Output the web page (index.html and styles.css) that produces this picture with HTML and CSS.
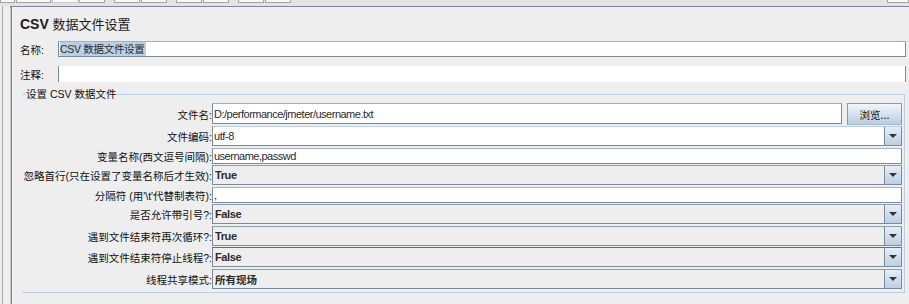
FILE: index.html
```html
<!DOCTYPE html>
<html lang="zh-CN">
<head>
    <meta charset="UTF-8">
    <meta name="viewport" content="width=device-width, initial-scale=1.0">
    <title>CSV 数据文件设置</title>
    <link rel="stylesheet" href="styles.css">
</head>
<body>
    <div class="toolbar">
        <div class="tb-group first">
            <span class="tb-btn"></span>
            <span class="tb-btn"></span>
            <span class="tb-btn light"></span>
            <span class="tb-btn"></span>
        </div>
        <div class="tb-group">
            <span class="tb-btn"></span>
            <span class="tb-btn"></span>
        </div>
        <div class="tb-group">
            <span class="tb-btn"></span>
            <span class="tb-btn"></span>
        </div>
        <div class="tb-group">
            <span class="tb-btn"></span>
            <span class="tb-btn"></span>
        </div>
        <div class="tb-group last">
            <span class="tb-btn"></span>
        </div>
    </div>

    <div class="main">
        <div class="gutter"></div>
        <div class="panel">
            <h1 class="title"><b>CSV</b> 数据文件设置</h1>

            <div class="line-row">
                <label class="short-label">名称:</label>
                <div class="field"><span class="sel">CSV 数据文件设置</span></div>
            </div>
            <div class="line-row comment-row">
                <label class="short-label">注释:</label>
                <div class="field comment"></div>
            </div>

            <fieldset class="group">
                <legend>设置 CSV 数据文件</legend>

                <div class="row r-file">
                    <label>文件名:</label>
                    <div class="field">D:/performance/jmeter/username.txt</div>
                    <button type="button" class="browse">浏览...</button>
                </div>
                <div class="row r-combo">
                    <label>文件编码:</label>
                    <div class="combo editable">
                        <div class="value">utf-8</div>
                        <div class="arrow"></div>
                    </div>
                </div>
                <div class="row r-text">
                    <label>变量名称(西文逗号间隔):</label>
                    <div class="field">username,passwd</div>
                </div>
                <div class="row r-combo">
                    <label>忽略首行(只在设置了变量名称后才生效):</label>
                    <div class="combo">
                        <div class="value">True</div>
                        <div class="arrow"></div>
                    </div>
                </div>
                <div class="row r-text">
                    <label>分隔符 (用'\t'代替制表符):</label>
                    <div class="field">,</div>
                </div>
                <div class="row r-combo">
                    <label>是否允许带引号?:</label>
                    <div class="combo">
                        <div class="value">False</div>
                        <div class="arrow"></div>
                    </div>
                </div>
                <div class="row r-combo tight">
                    <label>遇到文件结束符再次循环?:</label>
                    <div class="combo">
                        <div class="value">True</div>
                        <div class="arrow"></div>
                    </div>
                </div>
                <div class="row r-combo">
                    <label>遇到文件结束符停止线程?:</label>
                    <div class="combo focused">
                        <div class="value">False</div>
                        <div class="arrow"></div>
                    </div>
                </div>
                <div class="row r-combo">
                    <label>线程共享模式:</label>
                    <div class="combo">
                        <div class="value cjk">所有现场</div>
                        <div class="arrow"></div>
                    </div>
                </div>
            </fieldset>
        </div>
    </div>
</body>
</html>
```

FILE: styles.css
```css
* {
    box-sizing: border-box;
}

html, body {
    margin: 0;
    padding: 0;
}

body {
    width: 909px;
    height: 304px;
    overflow: hidden;
    background-color: #eeeeee;
    font-family: "Liberation Sans", "Noto Sans CJK SC", sans-serif;
    font-size: 12px;
    color: #333333;
}

/* strip of toolbar buttons cut off at the top */
.toolbar {
    display: flex;
    height: 6px;
    background-color: #e3e3e3;
}

.tb-group {
    display: flex;
    gap: 1px;
}

.tb-group + .tb-group {
    margin-left: 9px;
}

.tb-group.last {
    margin-left: auto;
}

.tb-btn {
    width: 26px;
    height: 3px;
    background-color: #f7f7f7;
    border: 1px solid #a4a4a4;
    border-top: none;
}

.tb-btn.light {
    background-color: #fbfbfb;
    border-color: #c8c8c8;
}

.first .tb-btn:nth-child(1) { width: 15px; }
.first .tb-btn:nth-child(2) { width: 35px; }
.last .tb-btn { width: 22px; }

.main {
    display: flex;
    height: 298px;
}

/* split pane handle */
.gutter {
    width: 11px;
    border-right: 1px dotted #9c9c9c;
    background: linear-gradient(to right, transparent 2px, #a8a8a8 2px, #a8a8a8 3px, transparent 3px);
}

.panel {
    flex: 1;
    border-top: 1px solid #7a8a99;
    border-left: 1px solid #7a8a99;
    padding: 0 3px 0 8px;
}

.title {
    margin: 0;
    height: 34px;
    line-height: 34px;
    font-size: 13px;
    font-weight: normal;
    color: #1a1a1a;
}

.title b {
    font-size: 14px;
    font-weight: bold;
}

.line-row {
    display: flex;
    align-items: center;
    height: 16px;
}

.comment-row {
    margin-top: 9px;
}

.short-label {
    width: 38px;
    font-size: 10.5px;
    color: #111111;
}

.field {
    flex: 1;
    height: 100%;
    display: flex;
    align-items: center;
    padding-left: 1px;
    background-color: #ffffff;
    border: 1px solid #7a8a99;
    border-top-color: #9fb2c6;
    white-space: nowrap;
    overflow: hidden;
    font-size: 11px;
    letter-spacing: -0.5px;
    color: #2b2b2b;
}

.field.comment {
    border-top: none;
    border-bottom: none;
}

.sel {
    background-color: #b8cfe5; /* selection */
    font-size: 10.5px;
    letter-spacing: -0.3px;
    line-height: 14px;
    padding-right: 1px;
}

/* titled border */
.group {
    margin: 6px 1px 0 2px;
    padding: 3px 2px 3px 0;
    border: 1px solid #b8cfe5;
    border-left: none;
    min-width: 0;
}

.group legend {
    margin-left: 3px;
    padding: 0 1px;
    font-size: 10.5px;
    line-height: 12px;
    color: #111111;
}

.row {
    display: flex;
    align-items: center;
    margin-bottom: 2px;
}

.row:last-child {
    margin-bottom: 0;
}

.row label {
    width: 190px;
    text-align: right;
    font-size: 10.5px;
    color: #111111;
    white-space: nowrap;
}

.r-file {
    height: 22px;
    margin-bottom: 1px;
}

.r-file .field {
    align-self: flex-start;
    height: 21px;
}

.r-text {
    height: 16px;
    margin-bottom: 1px;
}

.r-combo {
    height: 20px;
}

.row.tight {
    margin-bottom: 1px;
}

.browse {
    width: 55px;
    height: 22px;
    margin-left: 5px;
    padding: 0;
    border: 1px solid #8a9aab;
    border-bottom-color: #a9bccf;
    background: linear-gradient(#f2f6fa, #b9cde2);
    font-family: "Noto Sans CJK SC", sans-serif;
    font-size: 10.5px;
    color: #111111;
}

.combo {
    flex: 1;
    height: 20px;
    display: flex;
    border: 1px solid #7a8a99;
    border-top-color: #8c9db0;
    background-color: #eeeeee;
}

.combo.focused {
    border-top-color: #5f6f80;
}

.combo .value {
    flex: 1;
    display: flex;
    align-items: center;
    padding-left: 2px;
    font-size: 11px;
    letter-spacing: -0.4px;
    font-weight: bold;
    color: #2b2b2b;
}

.combo .value.cjk {
    font-size: 10.5px;
    letter-spacing: 0;
}

.combo.editable {
    border-top-color: #b8cfe5;
}

.combo.editable .value {
    background-color: #ffffff;
    font-weight: normal;
    padding-left: 1px;
}

.combo .arrow {
    width: 17px;
    display: flex;
    align-items: center;
    justify-content: center;
    border-left: 1px solid #7a8a99;
    background: linear-gradient(#e6eef6, #bccfe3);
}

.combo .arrow::after {
    content: "";
    border-left: 4px solid transparent;
    border-right: 4px solid transparent;
    border-top: 4px solid #333333;
}
```
